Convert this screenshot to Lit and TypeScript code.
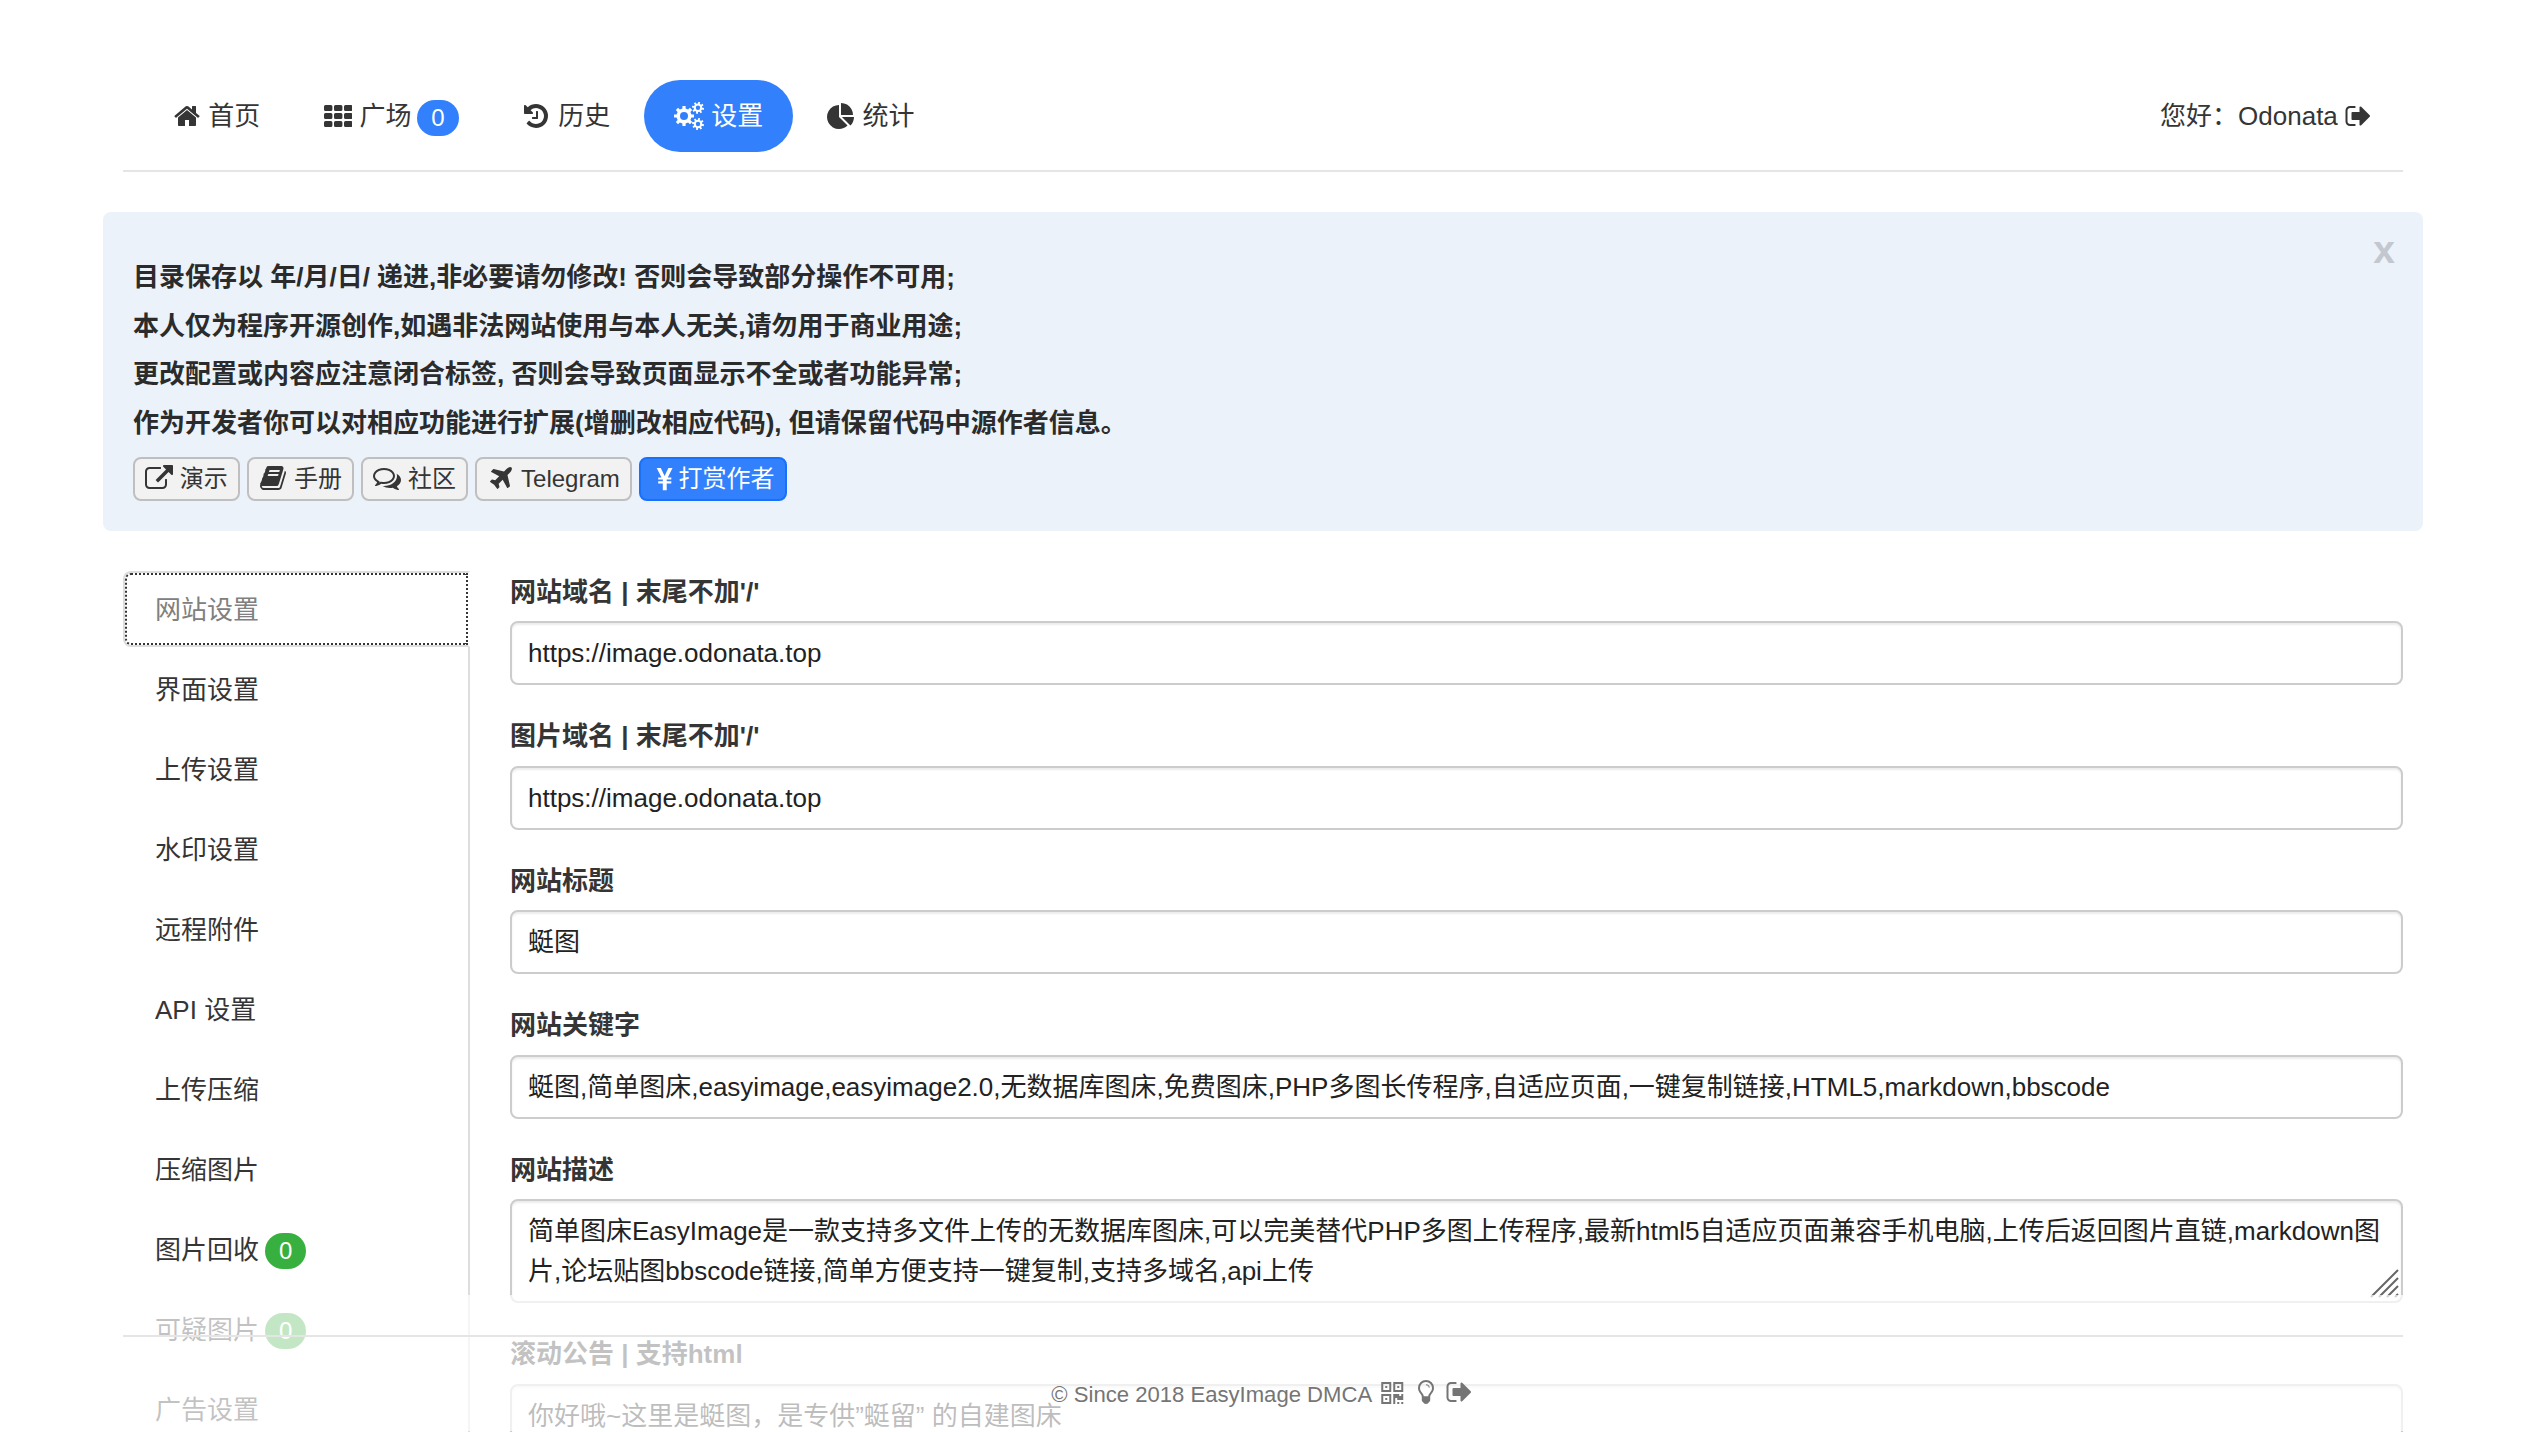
import { LitElement, html, svg, css } from "lit";
import { customElement, property } from "lit/decorators.js";
import { classMap } from "lit/directives/class-map.js";

/** Outline of a toothed wheel with a round hole, centred on (cx, cy). */
function gear(cx: number, cy: number, root: number, tip: number, hole: number, turn = 0): string {
  const teeth = 8;
  const step = (Math.PI * 2) / teeth;
  const points: string[] = [];
  const at = (r: number, a: number) =>
    `${(cx + r * Math.cos(a)).toFixed(2)} ${(cy + r * Math.sin(a)).toFixed(2)}`;
  for (let i = 0; i < teeth; i++) {
    const a = i * step + turn;
    points.push(at(root, a - step * 0.27), at(tip, a - step * 0.2), at(tip, a + step * 0.2), at(root, a + step * 0.27));
  }
  return `M${points.join("L")}ZM${cx - hole} ${cy}a${hole} ${hole} 0 1 0 ${hole * 2} 0a${hole} ${hole} 0 1 0 ${-hole * 2} 0Z`;
}

const PATHS: Record<string, { box: string; w: number; h: number; d: string }> = {
  home: {
    box: "64 0 1728 1792", w: 27, h: 28,
    d: "M1472 992v480q0 26-19 45t-45 19h-384v-384h-256v384h-384q-26 0-45-19t-19-45v-480q0-1 .5-3t.5-3l575-474 575 474q1 2 1 6zm223-69l-62 74q-8 9-21 11h-3q-13 0-21-7l-692-577-692 577q-12 8-24 7-13-2-21-11l-62-74q-8-10-7-23.5t11-21.5l719-599q32-26 76-26t76 26l244 204v-195q0-14 9-23t23-9h192q14 0 23 9t9 23v408l219 182q10 8 11 21.5t-7 23.5z",
  },
  history: {
    box: "128 0 1728 1792", w: 27, h: 28,
    d: "M1664 896q0 156-61 298t-164 245-245 164-298 61q-172 0-327-72.5t-264-204.5q-7-10-6.5-22.5t8.5-20.5l137-138q10-9 25-9 16 2 23 12 73 95 179 147t225 52q104 0 198.5-40.5t163.5-109.5 109.5-163.5 40.5-198.5-40.5-198.5-109.5-163.5-163.5-109.5-198.5-40.5q-98 0-188 35.5t-160 101.5l137 138q31 30 14 69-17 40-59 40h-448q-26 0-45-19t-19-45v-448q0-42 40-59 39-17 69 14l130 129q107-101 244.5-156.5t284.5-55.5q156 0 298 61t245 164 164 245 61 298zm-640-288v448q0 14-9 23t-23 9h-320q-14 0-23-9t-9-23v-64q0-14 9-23t23-9h224v-352q0-14 9-23t23-9h64q14 0 23 9t9 23z",
  },
  pie: {
    box: "0 -64 1792 1792", w: 28, h: 28,
    d: "M768 890l546 546q-106 108-247.5 168t-298.5 60q-209 0-385.5-103t-279.5-279.5-103-385.5 103-385.5 279.5-279.5 385.5-103v762zm187 6h773q0 157-60 298.5t-168 247.5zm709-128h-768v-768q209 0 385.5 103t279.5 279.5 103 385.5z",
  },
  signout: {
    box: "32 0 1664 1792", w: 26, h: 28,
    d: "M704 1440q0 4 1 20t.5 26.5-3 23.5-10 19.5-20.5 6.5h-320q-119 0-203.5-84.5t-84.5-203.5v-704q0-119 84.5-203.5t203.5-84.5h320q13 0 22.5 9.5t9.5 22.5q0 4 1 20t.5 26.5-3 23.5-10 19.5-20.5 6.5h-320q-66 0-113 47t-47 113v704q0 66 47 113t113 47h312l11.5 1 11.5 3 8 5.5 7 9 2 13.5zm928-544q0 26-19 45l-544 544q-19 19-45 19t-45-19-19-45v-288h-448q-26 0-45-19t-19-45v-384q0-26 19-45t45-19h448v-288q0-26 19-45t45-19 45 19l544 544q19 19 19 45z",
  },
  external: {
    box: "0 0 1792 1792", w: 28, h: 28,
    d: "M1408 928v320q0 119-84.5 203.5t-203.5 84.5h-832q-119 0-203.5-84.5t-84.5-203.5v-832q0-119 84.5-203.5t203.5-84.5h704q14 0 23 9t9 23v64q0 14-9 23t-23 9h-704q-66 0-113 47t-47 113v832q0 66 47 113t113 47h832q66 0 113-47t47-113v-320q0-14 9-23t23-9h64q14 0 23 9t9 23zm384-864v512q0 26-19 45t-45 19-45-19l-176-176-652 652q-10 10-23 10t-23-10l-114-114q-10-10-10-23t10-23l652-652-176-176q-19-19-19-45t19-45 45-19h512q26 0 45 19t19 45z",
  },
  book: {
    box: "0 64 1792 1792", w: 28, h: 28,
    d: "M1703 478q40 57 18 129l-275 906q-19 64-76.5 107.5t-122.5 43.5h-923q-77 0-148.5-53.5t-99.5-131.5q-24-67-2-127 0-4 3-27t4-37q1-8-3-21.5t-3-19.5q2-11 8-21t16.5-23.5 16.5-23.5q23-38 45-91.5t30-91.5q3-10 .5-30t-.5-28q3-11 17-28t17-23q21-36 42-92t25-90q1-9-2.5-32t.5-28q4-13 22-30.5t22-22.5q19-26 42.5-84.5t27.5-96.5q1-8-3-25.5t-2-26.5q2-8 9-18t18-23 17-21q8-12 16.5-30.5t15-35 16-36 19.5-32 26.5-23.5 36-11.5 47.5 5.5l-1 3q38-9 51-9h761q74 0 114 56t18 130l-274 906q-36 119-71.5 153.5t-128.5 34.5h-869q-27 0-38 15-11 16-1 43 24 70 144 70h923q29 0 56-15.5t35-41.5l300-987q7-22 5-57 38 15 59 43zm-1064 2q-4 13 2 22.5t20 9.5h608q13 0 25.5-9.5t16.5-22.5l21-64q4-13-2-22.5t-20-9.5h-608q-13 0-25.5 9.5t-16.5 22.5zm-83 256q-4 13 2 22.5t20 9.5h608q13 0 25.5-9.5t16.5-22.5l21-64q4-13-2-22.5t-20-9.5h-608q-13 0-25.5 9.5t-16.5 22.5z",
  },
  comments: {
    box: "0 64 1792 1792", w: 28, h: 28,
    d: "M704 384q-153 0-286 52t-211.5 141-78.5 191q0 82 53 158t149 132l97 56-35 84q34-20 62-39l44-31 53 10q78 14 153 14 153 0 286-52t211.5-141 78.5-191-78.5-191-211.5-141-286-52zm0-128q191 0 353.5 68.5t256.5 186.5 94 257-94 257-256.5 186.5-353.5 68.5q-86 0-176-16-124 88-278 128-36 9-86 16h-3q-11 0-20.5-8t-11.5-21q-1-3-1-6.5t.5-6.5 2-6l2.5-5 3.5-5.5 4-5 4.5-5 4-4.5q5-6 23-25t26-29.5 22.5-29 25-38.5 20.5-44q-124-72-195-177t-71-224q0-139 94-257t256.5-186.5 353.5-68.5zm822 1169q10 24 20.5 44t25 38.5 22.5 29 26 29.5 23 25q1 1 4 4.5t4.5 5 4 5 3.5 5.5l2.5 5 2 6 .5 6.5-1 6.5q-3 14-13 22t-22 7q-50-7-86-16-154-40-278-128-90 16-176 16-271 0-472-132 58 4 88 4 161 0 309-45t264-129q125-92 192-212t67-254q0-77-23-152 129 71 204 178t75 230q0 120-71 224.5t-195 176.5z",
  },
  plane: {
    box: "0 0 1728 1792", w: 27, h: 28,
    d: "M1568 160q44 52 12 148t-108 172l-161 161 160 696q5 19-12 33l-128 96q-7 6-19 6-4 0-7-1-15-3-21-16l-279-508-259 259 53 194q5 17-8 31l-96 96q-9 9-23 9h-2q-15-2-24-13l-189-252-252-189q-11-7-13-23-1-13 9-25l96-97q9-9 23-9 6 0 8 1l194 53 259-259-508-279q-14-8-17-24-2-16 9-27l128-128q14-13 30-8l665 159 160-160q76-76 172-108t148 12z",
  },
  cogs: {
    box: "0 0 30 28", w: 30, h: 28,
    d: gear(10, 14, 7.6, 10.1, 4) + gear(24, 5.8, 4.3, 6.1, 2.2, 0.2) + gear(24, 22, 4.3, 6.1, 2.2, 0.2),
  },
  grid: {
    box: "0 0 28 28", w: 28, h: 28,
    d: [3, 11, 19].flatMap((y) => [0, 10, 20].map((x) =>
      `M${x + 1.5} ${y}h5.4a1.5 1.5 0 0 1 1.5 1.5v3a1.5 1.5 0 0 1-1.5 1.5h-5.4a1.5 1.5 0 0 1-1.5-1.5v-3a1.5 1.5 0 0 1 1.5-1.5z`)).join(""),
  },
  yen: {
    box: "-1.5 0 24 28", w: 24, h: 28,
    d: "M4.200 3h4.100l3.800 8 3.800-8h4.100l-4.700 9.400h3.500v2.200h-4.600v1.600h4.600v2.200h-4.600v6.800h-3.900v-6.800H5.700v-2.200h4.600v-1.600H5.700v-2.200h3.300z",
  },
  qr: {
    box: "0 0 22 22", w: 22.5, h: 22,
    d: "M0 0h10v10H0zM2 2v6h6V2zM4 4h2v2H4zM12 0h10v10H12zM14 2v6h6V2zM16 4h2v2h-2zM0 12h10v10H0zM2 14v6h6v-6zM4 16h2v2H4zM12 12h6v2h2v-2h2v6h-6v-2h-2v6h-2zM16 20h2v2h-2zM20 20h2v2h-2z",
  },
  bulb: {
    box: "0 0 16 24", w: 16, h: 24,
    d: "M8 0a8 8 0 0 1 8 8c0 3-1.500 4.500-2.800 6.200-.6.8-1 1.600-1 2.500v3.600c0 .9-.5 1.500-1.200 1.700-.5 1.300-1.600 2-3 2s-2.500-.7-3-2c-.7-.2-1.200-.8-1.200-1.700v-3.600c0-.9-.4-1.700-1-2.500C1.500 12.500 0 11 0 8a8 8 0 0 1 8-8zM8 2a6 6 0 0 0-6 6c0 2.200 1 3.400 2.200 4.900.9 1.100 1.500 2.100 1.600 3.300h4.400c.1-1.200.7-2.200 1.600-3.300C13 11.400 14 10.200 14 8a6 6 0 0 0-6-6zM8 4.200c2 0 3.800 1.400 3.800 3.300h-1.100c0-1.400-1.400-2.200-2.700-2.200z",
  },
};

@customElement("ui-icon")
export class UiIcon extends LitElement {
  static styles = css`
    :host { display: inline-flex; flex: none; }
    .glyph { display: block; fill: currentColor; fill-rule: evenodd; }
    .nonzero { fill-rule: nonzero; }
  `;
  @property() name = "home";
  render() {
    const icon = PATHS[this.name];
    const nonzero = icon.box.includes("1792");
    return html`<svg class=${classMap({ glyph: true, nonzero })} width=${icon.w} height=${icon.h} viewBox=${icon.box}>
      ${svg`<path d=${icon.d}></path>`}
    </svg>`;
  }
}

interface NavItem { icon: string; text: string; badge?: string; active?: boolean }
interface SideItem { text: string; badge?: string; active?: boolean }
interface Field { label: string; value: string; area?: boolean; grip?: boolean }

const NAV: NavItem[] = [
  { icon: "home", text: "首页" },
  { icon: "grid", text: "广场", badge: "0" },
  { icon: "history", text: "历史" },
  { icon: "cogs", text: "设置", active: true },
  { icon: "pie", text: "统计" },
];

const NOTICE = [
  "目录保存以 年/月/日/ 递进,非必要请勿修改! 否则会导致部分操作不可用;",
  "本人仅为程序开源创作,如遇非法网站使用与本人无关,请勿用于商业用途;",
  "更改配置或内容应注意闭合标签, 否则会导致页面显示不全或者功能异常;",
  "作为开发者你可以对相应功能进行扩展(增删改相应代码), 但请保留代码中源作者信息。",
];

const LINKS = [
  { icon: "external", text: "演示" },
  { icon: "book", text: "手册" },
  { icon: "comments", text: "社区" },
  { icon: "plane", text: "Telegram" },
  { icon: "yen", text: "打赏作者", primary: true },
];

const SIDE: SideItem[] = [
  { text: "网站设置", active: true },
  { text: "界面设置" },
  { text: "上传设置" },
  { text: "水印设置" },
  { text: "远程附件" },
  { text: "API 设置" },
  { text: "上传压缩" },
  { text: "压缩图片" },
  { text: "图片回收", badge: "0" },
  { text: "可疑图片", badge: "0" },
  { text: "广告设置" },
];

const FIELDS: Field[] = [
  { label: "网站域名 | 末尾不加'/'", value: "https://image.odonata.top" },
  { label: "图片域名 | 末尾不加'/'", value: "https://image.odonata.top" },
  { label: "网站标题", value: "蜓图" },
  { label: "网站关键字", value: "蜓图,简单图床,easyimage,easyimage2.0,无数据库图床,免费图床,PHP多图长传程序,自适应页面,一键复制链接,HTML5,markdown,bbscode" },
  { label: "网站描述", area: true, grip: true, value: "简单图床EasyImage是一款支持多文件上传的无数据库图床,可以完美替代PHP多图上传程序,最新html5自适应页面兼容手机电脑,上传后返回图片直链,markdown图片,论坛贴图bbscode链接,简单方便支持一键复制,支持多域名,api上传" },
  { label: "滚动公告 | 支持html", area: true, value: "你好哦~这里是蜓图，是专供”蜓留” 的自建图床" },
];

@customElement("app-root")
export class AppRoot extends LitElement {
  static styles = css`
    :host {
      display: block; position: relative; height: 1432px; overflow: hidden;
      background: #fff; color: #353535;
      font: 26px/40px "Liberation Sans", "Noto Sans CJK SC", sans-serif;
    }
    * { box-sizing: border-box; }
    .container { width: 2320px; margin: 0 auto; display: flex; flex-direction: column; }
    .header {
      margin: 0 20px; padding: 80px 2px 18px 21px; border-bottom: 2px solid #e5e5e5;
      display: flex; justify-content: space-between;
    }
    .nav { display: flex; gap: 4px; }
    .link { display: flex; align-items: center; gap: 7.2px; padding: 0 30px; height: 72px; border-radius: 36px; white-space: pre; }
    .link.active { background: #3280fc; color: #fff; }
    .badge {
      height: 36px; line-height: 36px; padding: 0 14px; border-radius: 18px;
      font-size: 24px; color: #fff; background: #3280fc; margin: 4px 1.4px 0 -1.4px;
    }
    .badge.green { background: #38b03f; margin: 3px 0 0 -1px; }
    .alert {
      position: relative; margin-top: 40px; height: 319px; padding: 41px 30px 0;
      border-radius: 8px; background: #ebf2f9; color: #2b2b2b;
    }
    .line { font-weight: 700; line-height: 48.6px; height: 48.6px; white-space: pre; }
    .close {
      position: absolute; right: 28px; top: 18px; font-size: 39px; font-weight: 700;
      line-height: 40px; color: #c3c7cf;
    }
    .buttons { display: flex; gap: 7.3px; margin-top: 9.6px; font-size: 24px; color: #353535; }
    .btn {
      display: flex; align-items: center; gap: 6.8px; height: 44px; padding: 0 10px;
      border: 2px solid #bfbfbf; border-radius: 8px; background: #f2f2f2; line-height: 36px;
    }
    .btn.primary { background: #3280fc; border-color: #1970fc; color: #fff; gap: 3.5px; }
    .body { display: flex; gap: 40px; margin: 40px 20px 0; height: 900px; }
    .side { width: 347px; border-right: 2px solid #ddd; display: flex; flex-direction: column; gap: 4px; }
    .tab {
      flex: none; height: 76px; padding: 1px 30px 0; border: 2px solid transparent;
      display: flex; align-items: center; gap: 7px;
    }
    .tab.active {
      margin-right: -2px; background: #fff; color: #808080;
      border-color: #ddd transparent #ddd #ddd; border-radius: 8px 0 0 8px;
      outline: 2px dotted #353535; outline-offset: -4px;
    }
    .form { flex: 1; display: flex; flex-direction: column; gap: 30.6px; }
    .field { display: flex; flex-direction: column; position: relative; }
    .label { font-weight: 700; height: 50px; padding-top: 0.5px; }
    .control {
      display: block; width: 100%; height: 64px; margin: 0; padding: 10px 16px;
      border: 2px solid #ccc; border-radius: 8px; background: #fff; color: #222;
      box-shadow: inset 0 2px 2px rgba(0, 0, 0, 0.075); font: inherit; outline: none;
      resize: none; overflow: hidden;
    }
    .control.area { height: 104px; }
    .grip { position: absolute; right: 4px; bottom: 4px; width: 30px; height: 30px; fill: none; stroke: #666; stroke-width: 2; }
    .footer {
      position: absolute; left: 0; right: 0; top: 1295px; height: 136px;
      background: rgba(255, 255, 255, 0.7); padding: 40px 123px 0;
    }
    .foot-row {
      border-top: 2px solid #e5e5e5; padding: 38px 3px 0 0; display: flex; justify-content: center;
      align-items: center; color: #757575; font-size: 22.1px; white-space: pre;
    }
    .qr { margin: -4px 14px 0 9px; }
    .bulb { margin: -6px 12px 0 0; }
    .out { margin-top: -6px; }
  `;

  private control(f: Field) {
    return html`<textarea class=${classMap({ control: true, area: !!f.area })} rows="1" readonly .value=${f.value}></textarea>`;
  }

  render() {
    return html`
      <div class="container">
        <header class="header">
          <nav class="nav">
            ${NAV.map((n) => html`<a class=${classMap({ link: true, active: !!n.active })}>
              <ui-icon name=${n.icon}></ui-icon><span>${n.text}</span>${n.badge ? html`<span class="badge">${n.badge}</span>` : ""}
            </a>`)}
          </nav>
          <a class="link"><span>您好：Odonata</span><ui-icon name="signout"></ui-icon></a>
        </header>
        <section class="alert">
          <span class="close">x</span>
          ${NOTICE.map((t) => html`<div class="line">${t}</div>`)}
          <div class="buttons">
            ${LINKS.map((b) => html`<a class=${classMap({ btn: true, primary: !!b.primary })}><ui-icon name=${b.icon}></ui-icon><span>${b.text}</span></a>`)}
          </div>
        </section>
        <div class="body">
          <aside class="side">
            ${SIDE.map((s) => html`<a class=${classMap({ tab: true, active: !!s.active })}><span>${s.text}</span>${s.badge ? html`<span class="badge green">${s.badge}</span>` : ""}</a>`)}
          </aside>
          <div class="form">
            ${FIELDS.map((f) => html`<div class="field">
              <label class="label">${f.label}</label>
              ${this.control(f)}
              ${f.grip ? html`<svg class="grip" viewBox="0 0 30 30"><path d="M2 28L29 1M10 28L29 9M18 28L29 17M26 28L29 25"></path></svg>` : ""}
            </div>`)}
          </div>
        </div>
      </div>
      <footer class="footer">
        <div class="foot-row"><span>© Since 2018 EasyImage DMCA</span><ui-icon class="qr" name="qr"></ui-icon><ui-icon class="bulb" name="bulb"></ui-icon><ui-icon class="out" name="signout"></ui-icon></div>
      </footer>
    `;
  }
}
